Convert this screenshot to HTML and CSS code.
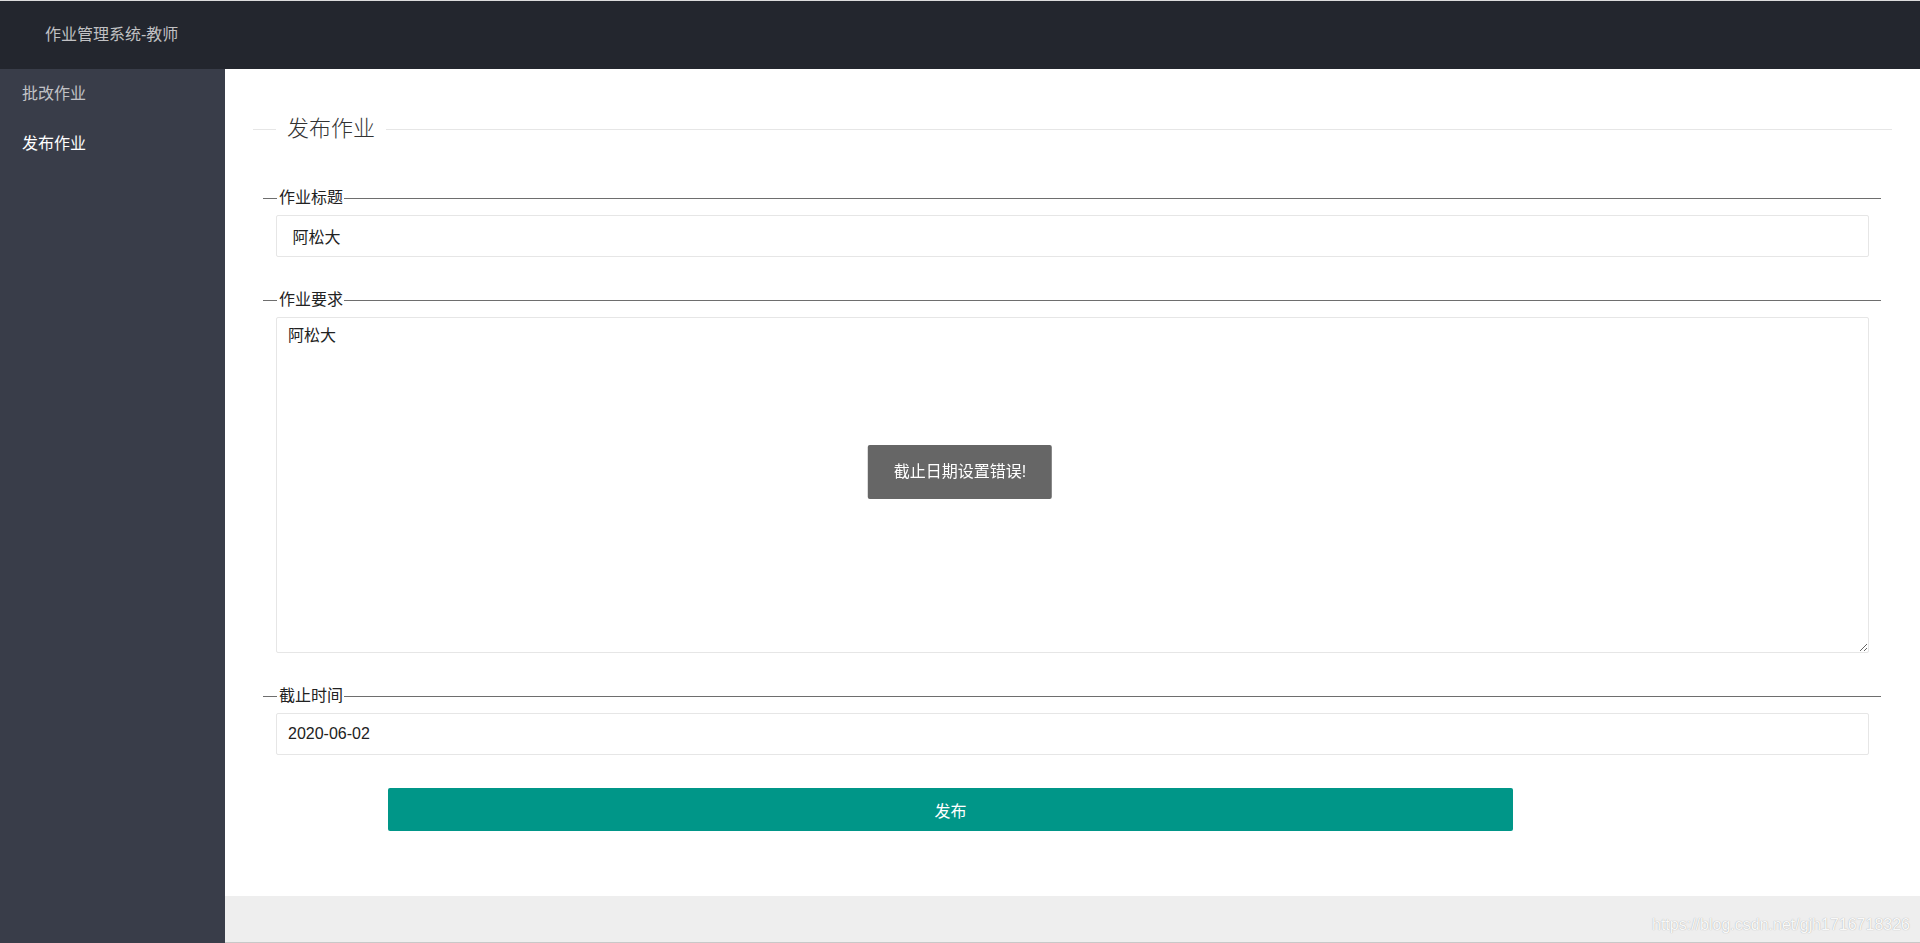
FILE: index.html
```html
<!DOCTYPE html>
<html>
<head>
    <meta charset="utf-8">
    <title>作业管理系统-教师</title>
    <link rel="stylesheet" href="styles.css">
</head>
<body>
    <div class="header">
        <div class="logo">作业管理系统-教师</div>
    </div>

    <div class="layout">
        <div class="side">
            <a class="nav-item">批改作业</a>
            <a class="nav-item active">发布作业</a>
        </div>

        <div class="body">
            <div class="panel">
                <div class="page-title"><span>发布作业</span></div>

                <form class="form">
                    <div class="field">
                        <div class="field-title"><span>作业标题</span></div>
                        <input class="input" type="text" value=" 阿松大">
                    </div>

                    <div class="field">
                        <div class="field-title"><span>作业要求</span></div>
                        <textarea class="textarea">阿松大</textarea>
                    </div>

                    <div class="field">
                        <div class="field-title"><span>截止时间</span></div>
                        <input class="input" type="text" value="2020-06-02">
                    </div>

                    <button type="button" class="btn">发布</button>
                </form>
            </div>

            <div class="footer">https://blog.csdn.net/gjh1716718326</div>
        </div>
    </div>

    <div class="toast">截止日期设置错误!</div>
</body>
</html>
```

FILE: styles.css
```css
body {
    margin: 0;
    padding: 0;
    height: 943px;
    overflow: hidden;
    font-family: "Liberation Sans", "Noto Sans CJK SC", sans-serif;
    font-size: 16px;
    color: #222;
}

.header {
    height: 68px;
    background-color: #23262e;
    border-top: 1px solid #dcdcdc;
}

.logo {
    padding-left: 45px;
    line-height: 68px;
    color: rgba(255, 255, 255, .72);
}

.layout {
    display: flex;
    height: 874px;
}

.side {
    width: 225px;
    flex-shrink: 0;
    background-color: #393d49;
}

.nav-item {
    display: block;
    height: 50px;
    line-height: 50px;
    padding-left: 22px;
    color: rgba(255, 255, 255, .7);
    cursor: pointer;
}

.nav-item.active {
    color: #fff;
}

.body {
    flex: 1;
    display: flex;
    flex-direction: column;
}

.panel {
    flex: 1;
    background-color: #fff;
    padding-top: 45px;
}

.page-title {
    display: flex;
    align-items: center;
    margin: 0 28px;
    font-size: 22px;
    font-weight: 300;
    line-height: 30px;
    color: #333;
}

.page-title::before {
    content: "";
    width: 23px;
    height: 1px;
    background-color: #e6e6e6;
}

.page-title::after {
    content: "";
    flex: 1;
    height: 1px;
    background-color: #e6e6e6;
}

.page-title span {
    padding: 0 11px;
}

.form {
    margin: 44px 39px 0 38px;
}

.field {
    margin-bottom: 33px;
}

.field-title {
    display: flex;
    align-items: center;
    line-height: 20px;
    margin-bottom: 7px;
    color: #222;
}

.field-title::before {
    content: "";
    width: 14px;
    height: 1px;
    background-color: #6e6e6e;
}

.field-title::after {
    content: "";
    flex: 1;
    height: 1px;
    background-color: #6e6e6e;
}

.field-title span {
    padding: 0 1px 0 2px;
}

.input,
.textarea {
    display: block;
    box-sizing: border-box;
    width: calc(100% - 25px);
    margin-left: 13px;
    border: 1px solid #e6e6e6;
    border-radius: 2px;
    background-color: #fff;
    font-family: "Liberation Sans", "Noto Sans CJK SC", sans-serif;
    font-size: 16px;
    color: #222;
    padding: 0 11px;
    outline: none;
}

.input {
    height: 42px;
}

.textarea {
    height: 336px;
    padding-top: 8px;
    line-height: 20px;
    resize: both;
}

.btn {
    display: block;
    width: 1125px;
    height: 43px;
    margin-left: 125px;
    border: none;
    border-radius: 2px;
    background-color: #009688;
    color: #fff;
    font-family: "Liberation Sans", "Noto Sans CJK SC", sans-serif;
    font-size: 16px;
    cursor: pointer;
}

.footer {
    height: 47px;
    box-sizing: border-box;
    padding: 19px 10px 0 0;
    line-height: 20px;
    text-align: right;
    background-color: #eee;
    border-bottom: 1px solid #c8c8c8;
    color: rgba(255, 255, 255, .95);
    text-shadow: 0 0 1px rgba(0, 0, 0, .35);
}

.toast {
    position: fixed;
    top: 50%;
    left: 50%;
    transform: translate(-50%, -50%);
    padding: 0 26px;
    line-height: 54px;
    border-radius: 2px;
    background-color: rgba(0, 0, 0, .6);
    color: #fff;
    white-space: nowrap;
}
```
